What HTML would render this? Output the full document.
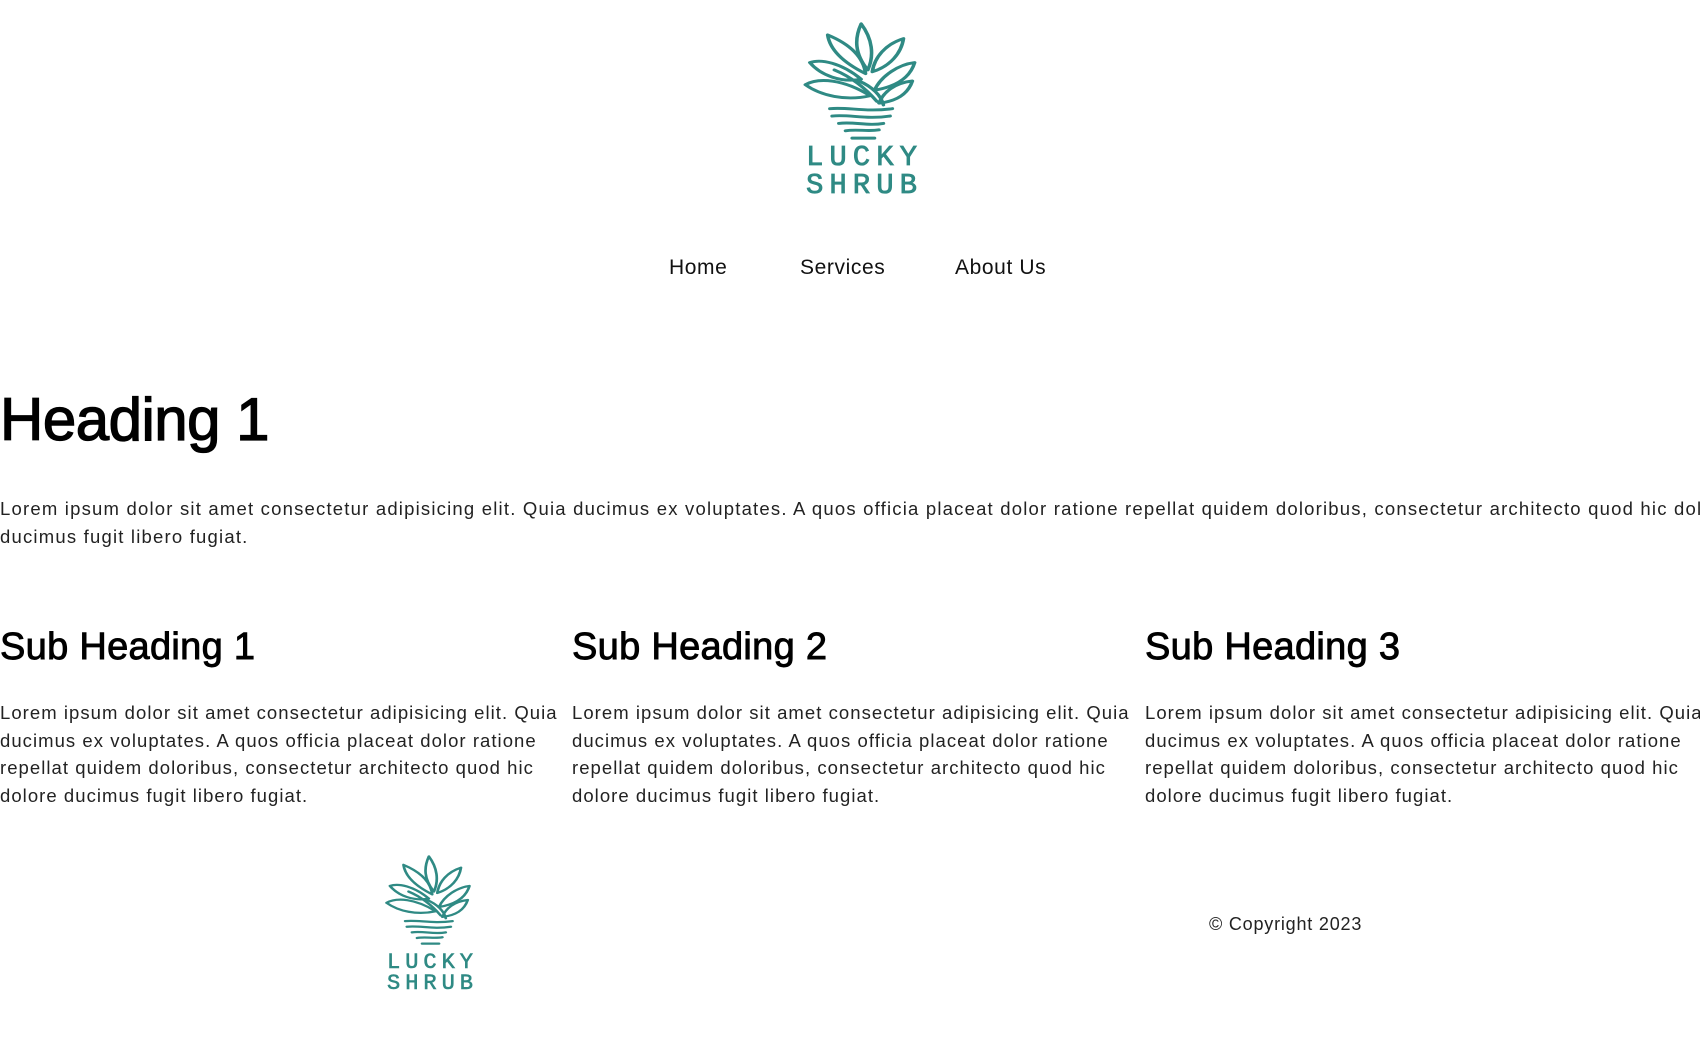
<!DOCTYPE html>
<html><head><meta charset="utf-8"><style>
html,body{margin:0;padding:0;background:#fff;width:1700px;height:1040px;overflow:hidden;font-family:"Liberation Sans",sans-serif;color:#111}
.abs{position:absolute;white-space:nowrap}
.nav{font-size:21px;top:256px;color:#111;letter-spacing:0.6px}
h1{position:absolute;left:0;top:386px;margin:0;font-size:60px;font-weight:normal;-webkit-text-stroke:1.3px #000;line-height:68px;letter-spacing:-0.5px;color:#000}
.p{font-size:18.5px;letter-spacing:1.2px;color:#222;line-height:28px}
h2{position:absolute;top:624px;margin:0;font-size:38px;font-weight:normal;-webkit-text-stroke:0.9px #000;line-height:46px;color:#000;white-space:nowrap;letter-spacing:0.3px}
.col{position:absolute;top:699px;font-size:18.5px;letter-spacing:1.05px;color:#222;line-height:27.5px;white-space:nowrap;width:572px;overflow:hidden}
.lt{position:absolute;font-family:'Liberation Mono',monospace;color:#2f8a84;text-align:center;white-space:nowrap}
</style></head><body>
<svg width="0" height="0" style="position:absolute"><defs>
<g id="logo" fill="none" stroke="#2f8a84" stroke-width="3.2" stroke-linecap="round" stroke-linejoin="round">
<path d="M52 2 C46 18 46 34 58 52 C64 36 62 18 52 2Z"/>
<path d="M22 14 C24 30 36 44 56 56 C54 38 42 24 22 14Z"/>
<path d="M90 18 C74 24 64 38 62 54 C78 48 88 34 90 18Z"/>
<path d="M6 44 C16 40 34 44 52 62 C34 66 16 58 6 44Z"/>
<path d="M2 68 C14 60 36 62 60 80 C38 86 16 80 2 68Z"/>
<path d="M100 44 C86 46 70 58 64 74 C84 70 96 60 100 44Z"/>
<path d="M28 52 C44 60 56 72 66 86"/>
<path d="M98 64 C82 66 72 76 68 88 C84 86 94 78 98 64Z"/>
<path d="M50 64 C62 70 70 80 72 90"/>
<path d="M24 94 C40 92 56 98 80 94"/>
<path d="M26 102 C42 100 56 106 78 102"/>
<path d="M32 110 C46 108 58 113 72 110"/>
<path d="M38 118 C48 116 58 119 68 117"/>
<path d="M44 126 L64 126"/>
</g></defs></svg>

<svg class="abs" style="left:802px;top:22px" width="116" height="118" viewBox="0 0 104 128" preserveAspectRatio="none"><use href="#logo" transform="translate(1,0)"/></svg>
<div class="lt" style="left:800px;top:144px;width:120px;font-size:29px;line-height:28px;letter-spacing:6px;padding-left:6px;box-sizing:border-box;-webkit-text-stroke:0.8px #2f8a84">LUCKY<br>SHRUB</div>

<div class="abs nav" style="left:669px">Home</div>
<div class="abs nav" style="left:800px">Services</div>
<div class="abs nav" style="left:955px">About Us</div>

<h1>Heading 1</h1>
<div class="abs p" style="left:0;top:495px">Lorem ipsum dolor sit amet consectetur adipisicing elit. Quia ducimus ex voluptates. A quos officia placeat dolor ratione repellat quidem doloribus, consectetur architecto quod hic dolore<br>ducimus fugit libero fugiat.</div>

<h2 style="left:0">Sub Heading 1</h2>
<h2 style="left:572px">Sub Heading 2</h2>
<h2 style="left:1145px">Sub Heading 3</h2>
<div class="col" style="left:0">Lorem ipsum dolor sit amet consectetur adipisicing elit. Quia<br>ducimus ex voluptates. A quos officia placeat dolor ratione<br>repellat quidem doloribus, consectetur architecto quod hic<br>dolore ducimus fugit libero fugiat.</div>
<div class="col" style="left:572px">Lorem ipsum dolor sit amet consectetur adipisicing elit. Quia<br>ducimus ex voluptates. A quos officia placeat dolor ratione<br>repellat quidem doloribus, consectetur architecto quod hic<br>dolore ducimus fugit libero fugiat.</div>
<div class="col" style="left:1145px">Lorem ipsum dolor sit amet consectetur adipisicing elit. Quia<br>ducimus ex voluptates. A quos officia placeat dolor ratione<br>repellat quidem doloribus, consectetur architecto quod hic<br>dolore ducimus fugit libero fugiat.</div>

<svg class="abs" style="left:384px;top:855px" width="88" height="90" viewBox="0 0 104 128" preserveAspectRatio="none"><use href="#logo" transform="translate(1,0)"/></svg>
<div class="lt" style="left:382px;top:952px;width:92px;font-size:22px;line-height:21px;letter-spacing:5px;padding-left:5px;box-sizing:border-box;-webkit-text-stroke:0.6px #2f8a84">LUCKY<br>SHRUB</div>

<div class="abs" style="left:1209px;top:914px;font-size:18px;letter-spacing:0.8px;color:#222">© Copyright 2023</div>
</body></html>
